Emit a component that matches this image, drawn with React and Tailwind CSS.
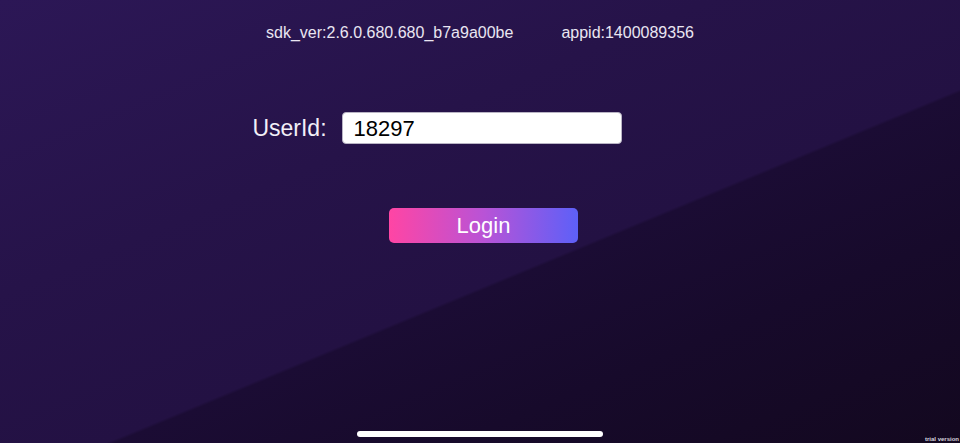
export default function App() {
  return (
    <div
      className="relative w-[960px] h-[443px] overflow-hidden flex flex-col items-center text-white bg-[linear-gradient(157.5deg,#2c1756_0%,#261349_35%,#231143_57.9%,#1b0c34_58.3%,#170a2b_75%,#13081f_100%)]"
      style={{ fontFamily: '"Liberation Sans", Arial, sans-serif' }}
    >
      <div className="mt-[23px] flex items-center gap-[48px] text-[16px] leading-[20px] text-[#eae6f2]">
        <span>sdk_ver:2.6.0.680.680_b7a9a00be</span>
        <span>appid:1400089356</span>
      </div>

      <div className="mt-[68px] mr-[86px] flex items-center gap-[15px]">
        <span className="text-[23px] text-[#f2eff7]">UserId:</span>
        <div className="w-[280px] h-[32px] bg-white rounded-[4px] border border-[#b9b4c4] flex items-center px-[11px]">
          <span className="text-[22px] text-black">18297</span>
        </div>
      </div>

      <button className="mt-[62px] ml-[7px] w-[189px] h-[35px] rounded-[5px] bg-[linear-gradient(90deg,#ff45a4,#b953d6_50%,#5d60f8)] text-[22px] text-white flex items-center justify-center">
        Login
      </button>

      <div className="absolute left-[357px] top-[431px] w-[246px] h-[6px] rounded-full bg-white" />
      <span className="absolute right-[1px] bottom-[0px] text-[6px] leading-[8px] font-bold text-[#d8d4de]">
        trial version
      </span>
    </div>
  );
}
